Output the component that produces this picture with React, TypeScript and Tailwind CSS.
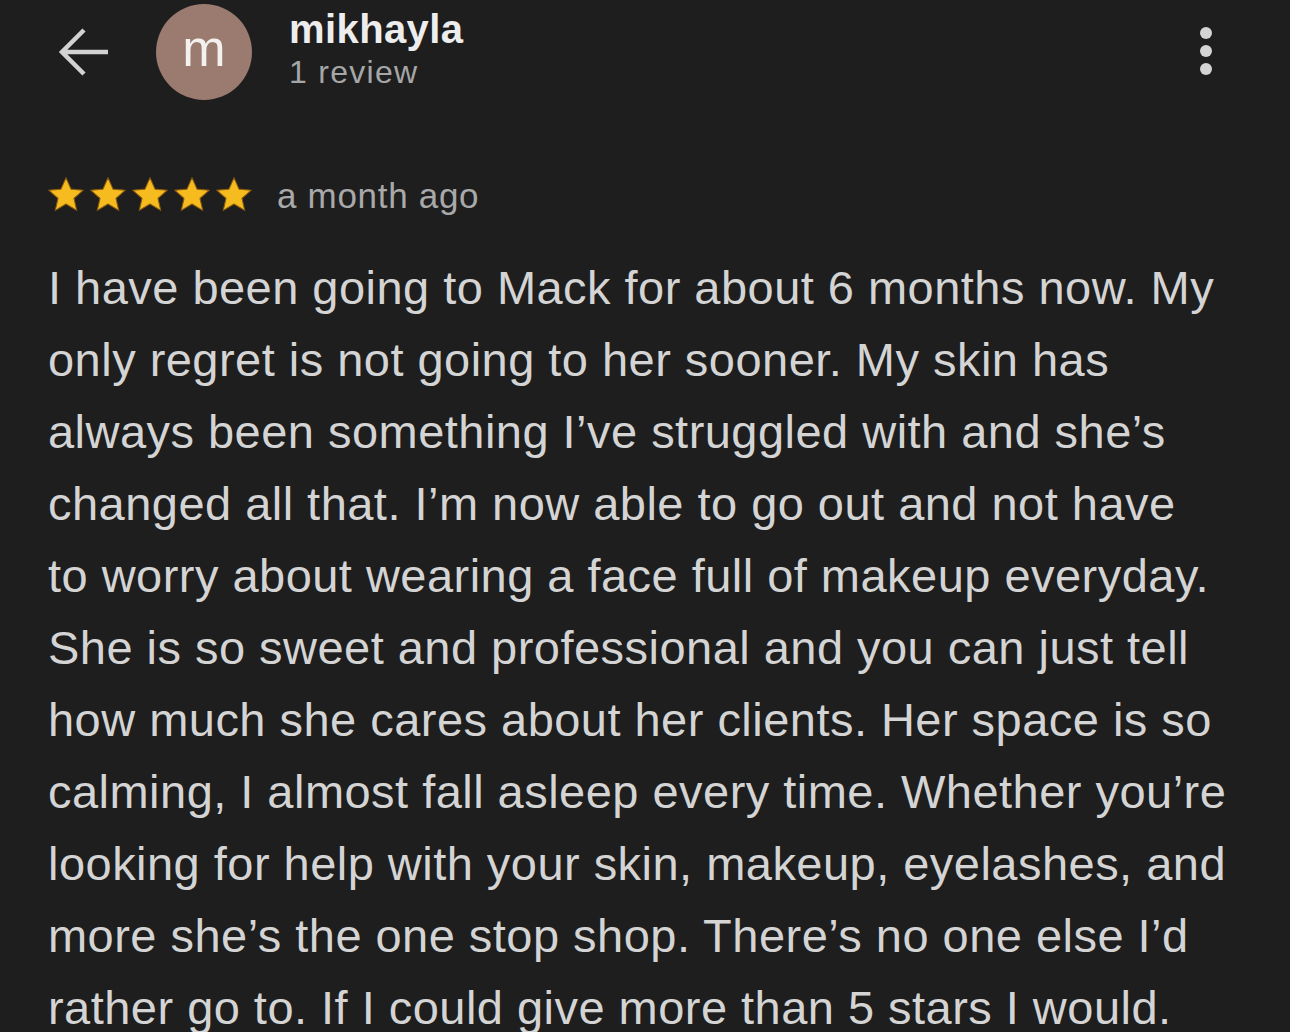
import { useState } from "react"

const lines = [
  "I have been going to Mack for about 6 months now. My",
  "only regret is not going to her sooner. My skin has",
  "always been something I\u2019ve struggled with and she\u2019s",
  "changed all that. I\u2019m now able to go out and not have",
  "to worry about wearing a face full of makeup everyday.",
  "She is so sweet and professional and you can just tell",
  "how much she cares about her clients. Her space is so",
  "calming, I almost fall asleep every time. Whether you\u2019re",
  "looking for help with your skin, makeup, eyelashes, and",
  "more she\u2019s the one stop shop. There\u2019s no one else I\u2019d",
  "rather go to. If I could give more than 5 stars I would.",
]

function Star() {
  return (
    <svg width="36" height="36" viewBox="1.6 1.8 20.8 20.8">
      <path
        d="M12 2.2l2.9 6.6 7.1.6-5.4 4.7 1.6 7-6.2-3.7-6.2 3.7 1.6-7L2 9.4l7.1-.6z"
        fill="#f6bb1e"
        stroke="#8a5a10"
        strokeWidth="0.6"
        strokeLinejoin="round"
      />
    </svg>
  )
}

export default function App() {
  const [rating] = useState(5)

  return (
    <div
      className="w-[1290px] h-[1032px] overflow-hidden bg-[#1e1e1e]"
      style={{ fontFamily: '"Liberation Sans", Arial, sans-serif' }}
    >
      {/* header */}
      <div className="flex items-center h-[104px] pl-[58px] pr-[78px]">
        <svg width="52" height="52" viewBox="0 0 52 52" className="shrink-0">
          <path
            d="M50 26H6M26 4L4 26l22 22"
            fill="none"
            stroke="#d2d2d2"
            strokeWidth="4.5"
            strokeLinecap="butt"
          />
        </svg>
        <div className="ml-[46px] w-[96px] h-[96px] rounded-full bg-[#9b7b70] flex items-center justify-center shrink-0">
          <span className="text-[52px] leading-none text-[#f3f0ee] -mt-[8px]">m</span>
        </div>
        <div className="ml-[37px] flex flex-col -mt-[6px]">
          <span className="text-[40px] leading-[46px] font-bold tracking-[0.01em] text-[#ededed]">mikhayla</span>
          <span className="text-[32px] leading-[40px] tracking-[0.04em] text-[#a6a6a6]">1 review</span>
        </div>
        <div className="ml-auto flex flex-col gap-[6px] -mt-[2px]">
          <span className="block w-[12px] h-[12px] rounded-full bg-[#d4d4d4]" />
          <span className="block w-[12px] h-[12px] rounded-full bg-[#d4d4d4]" />
          <span className="block w-[12px] h-[12px] rounded-full bg-[#d4d4d4]" />
        </div>
      </div>

      {/* rating row */}
      <div className="flex items-center mt-[71px] pl-[48px] h-[40px]">
        <div className="flex gap-[6px]">
          {Array.from({ length: rating }).map((_, i) => (
            <Star key={i} />
          ))}
        </div>
        <span className="ml-[25px] text-[35px] tracking-[0.02em] text-[#a9a9a9] leading-none">a month ago</span>
      </div>

      {/* review body */}
      <div className="mt-[37px] pl-[48px] text-[47px] leading-[72px] tracking-[0.01em] text-[#d4d4d4]">
        {lines.map((l, i) => (
          <div key={i} className="whitespace-nowrap">
            {l}
          </div>
        ))}
      </div>
    </div>
  )
}
